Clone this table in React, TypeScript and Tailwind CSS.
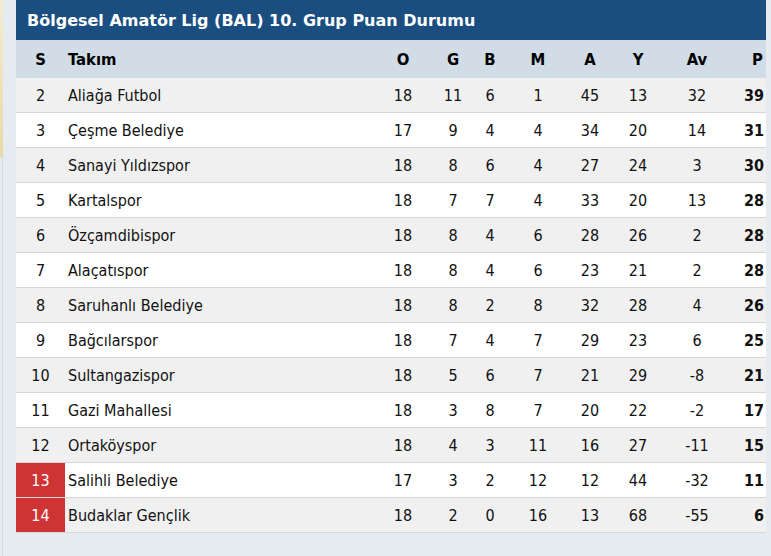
import React from "react";

type Row = [number, string, number, number, number, number, number, number, number, number];

const rows: Row[] = [
  [2, "Aliağa Futbol", 18, 11, 6, 1, 45, 13, 32, 39],
  [3, "Çeşme Belediye", 17, 9, 4, 4, 34, 20, 14, 31],
  [4, "Sanayi Yıldızspor", 18, 8, 6, 4, 27, 24, 3, 30],
  [5, "Kartalspor", 18, 7, 7, 4, 33, 20, 13, 28],
  [6, "Özçamdibispor", 18, 8, 4, 6, 28, 26, 2, 28],
  [7, "Alaçatıspor", 18, 8, 4, 6, 23, 21, 2, 28],
  [8, "Saruhanlı Belediye", 18, 8, 2, 8, 32, 28, 4, 26],
  [9, "Bağcılarspor", 18, 7, 4, 7, 29, 23, 6, 25],
  [10, "Sultangazispor", 18, 5, 6, 7, 21, 29, -8, 21],
  [11, "Gazi Mahallesi", 18, 3, 8, 7, 20, 22, -2, 17],
  [12, "Ortaköyspor", 18, 4, 3, 11, 16, 27, -11, 15],
  [13, "Salihli Belediye", 17, 3, 2, 12, 12, 44, -32, 11],
  [14, "Budaklar Gençlik", 18, 2, 0, 16, 13, 68, -55, 6],
];

const grid =
  "grid grid-cols-[49px_315px_46px_54px_20px_76px_28px_68px_50px_44px]";

export default function App() {
  return (
    <div
      className="relative w-[771px] h-[556px] bg-[#e6ebf0] overflow-hidden"
      style={{ fontFamily: '"DejaVu Sans Condensed", "DejaVu Sans", sans-serif' }}
    >
      <div className="absolute left-0 top-0 w-[3px] h-[157px] bg-gradient-to-b from-[#f3ecd0] to-[#e9d9a8]" />
      <div className="absolute left-[2px] top-[157px] w-[1px] h-[399px] bg-[#d6d9dc]" />
      <div className="ml-[16px] w-[750px]">
        <div
          className="h-[40px] bg-[#1b4e80] flex items-center pl-[11px] pt-[1px] text-white font-bold text-[16px]"
          style={{ fontFamily: '"DejaVu Sans", sans-serif' }}
        >
          Bölgesel Amatör Lig (BAL) 10. Grup Puan Durumu
        </div>
        <div className={`${grid} h-[38px] bg-[#d1dce6] items-center pt-[3px] font-bold text-[16.5px] text-black`}>
          <div className="text-center">S</div>
          <div className="pl-[3px]">Takım</div>
          <div className="text-center">O</div>
          <div className="text-center">G</div>
          <div className="text-center">B</div>
          <div className="text-center">M</div>
          <div className="text-center">A</div>
          <div className="text-center">Y</div>
          <div className="text-center">Av</div>
          <div className="text-right pr-[3px]">P</div>
        </div>
        {rows.map((r, i) => {
          const red = r[0] >= 13;
          return (
            <div
              key={r[0]}
              className={`${grid} h-[35px] border-b border-[#d7d7d7] text-[16px] text-[#111] ${
                i % 2 === 0 ? "bg-[#f0f0f0]" : "bg-white"
              }`}
            >
              <div
                className={`flex items-center justify-center pt-[1px] ${
                  red ? "bg-[#cf3434] text-white" : ""
                }`}
              >
                {r[0]}
              </div>
              <div className="flex items-center pl-[3px] pt-[1px]">{r[1]}</div>
              {[r[2], r[3], r[4], r[5], r[6], r[7], r[8]].map((v, j) => (
                <div key={j} className="flex items-center justify-center pt-[1px]">
                  {v}
                </div>
              ))}
              <div className="flex items-center justify-end pr-[2px] pt-[1px] font-bold">{r[9]}</div>
            </div>
          );
        })}
      </div>
    </div>
  );
}
